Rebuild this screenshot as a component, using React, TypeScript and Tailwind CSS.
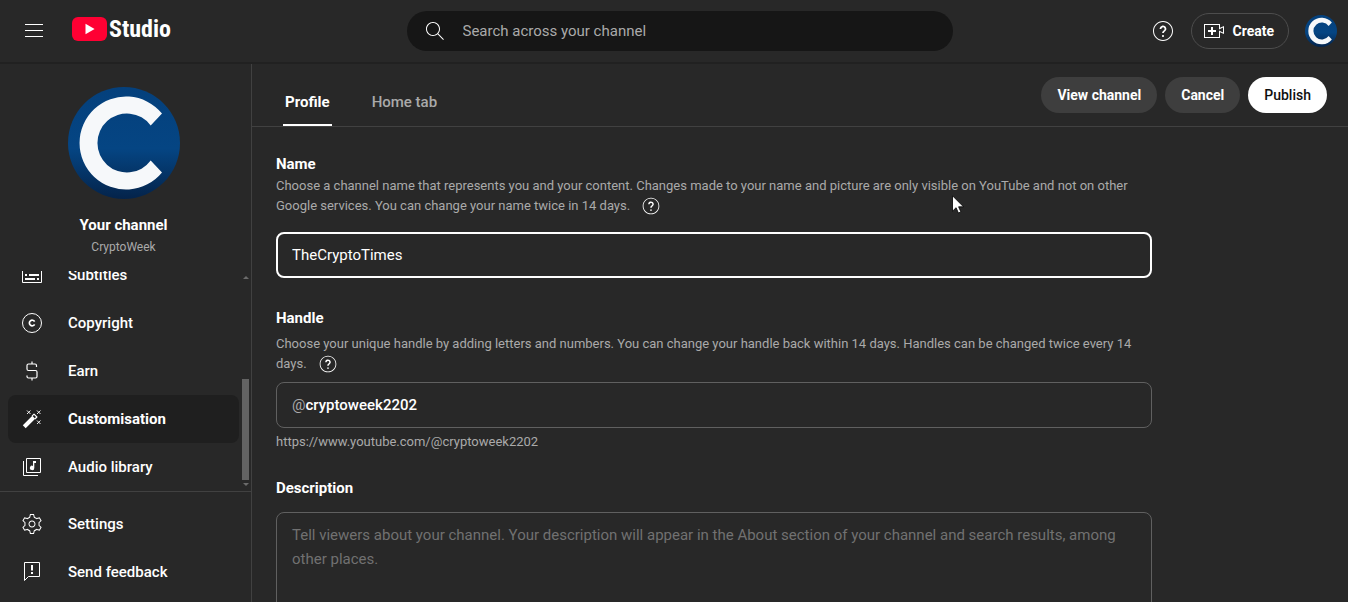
import { useState } from 'react';
import type { ReactNode } from 'react';
import clsx from 'clsx';

const HELP_PATH =
  'M15.36,9.96c0,1.09-0.67,1.67-1.31,2.24c-0.53,0.47-1.03,0.9-1.16,1.6L12.85,14h-1.75l0.03-0.28c0.14-1.17,0.8-1.76,1.47-2.27c0.52-0.4,1.01-0.77,1.01-1.49c0-0.51-0.23-0.97-0.63-1.29c-0.4-0.31-0.92-0.42-1.42-0.29c-0.59,0.15-1.05,0.67-1.19,1.34L10.32,10H8.57l0.06-0.42c0.2-1.4,1.15-2.53,2.42-2.87c1.05-0.29,2.14-0.08,2.98,0.57C14.88,7.92,15.36,8.9,15.36,9.96z M12,18c0.55,0,1-0.45,1-1s-0.45-1-1-1s-1,0.45-1,1S11.45,18,12,18z M12,3c-4.96,0-9,4.04-9,9s4.04,9,9,9s9-4.04,9-9S16.96,3,12,3 M12,2c5.52,0,10,4.48,10,10s-4.48,10-10,10S2,17.52,2,12S6.48,2,12,2L12,2z';

const SETTINGS_PATH =
  'M12 9.5c1.38 0 2.5 1.12 2.5 2.5s-1.12 2.5-2.5 2.5-2.5-1.12-2.5-2.5 1.12-2.5 2.5-2.5m0-1c-1.93 0-3.5 1.57-3.5 3.5s1.57 3.5 3.5 3.5 3.5-1.57 3.5-3.5-1.57-3.5-3.5-3.5zM13.22 3l.55 2.2.13.51.5.18c.61.23 1.19.56 1.72.98l.4.32.5-.14 2.17-.62 1.22 2.11-1.63 1.59-.37.36.08.51c.05.32.08.64.08.98s-.03.66-.08.98l-.08.51.37.36 1.63 1.59-1.22 2.11-2.17-.62-.5-.14-.4.32c-.53.43-1.11.76-1.72.98l-.5.18-.13.51-.55 2.24h-2.44l-.55-2.2-.13-.51-.5-.18c-.6-.23-1.18-.56-1.72-.99l-.4-.32-.5.14-2.17.62-1.21-2.12 1.63-1.59.37-.36-.08-.51c-.05-.32-.08-.65-.08-.98s.03-.66.08-.98l.08-.51-.37-.36L3.6 8.56l1.22-2.11 2.17.62.5.14.4-.32c.53-.44 1.11-.77 1.72-.99l.5-.18.13-.51.54-2.21h2.44M14 2h-4l-.74 2.96c-.73.27-1.4.66-2 1.14l-2.92-.83-2 3.46 2.19 2.13c-.06.37-.09.75-.09 1.14s.03.77.09 1.14l-2.19 2.13 2 3.46 2.92-.83c.6.48 1.27.87 2 1.14L10 22h4l.74-2.96c.73-.27 1.4-.66 2-1.14l2.92.83 2-3.46-2.19-2.13c.06-.37.09-.75.09-1.14s-.03-.77-.09-1.14l2.19-2.13-2-3.46-2.92.83c-.6-.48-1.27-.87-2-1.14L14 2z';

function Icon({ children, className = 'h-6 w-6' }: { children: ReactNode; className?: string }) {
  return (
    <svg viewBox="0 0 24 24" fill="currentColor" className={clsx('shrink-0', className)} aria-hidden="true">
      {children}
    </svg>
  );
}

const menuItems = [
  {
    id: 'subtitles',
    label: 'Subtitles',
    icon: (
      <>
        <path d="M2.5 4.5h19v15h-19z" fill="none" stroke="currentColor" />
        <path d="M5 11h2v2H5zM9 11h10v2H9zM5 15h10v2H5zM17 15h2v2h-2z" />
      </>
    )
  },
  {
    id: 'copyright',
    label: 'Copyright',
    icon: (
      <>
        <circle cx="12" cy="12" r="9.5" fill="none" stroke="currentColor" />
        <path d="M14.6 10.6A2.8 2.8 0 1 0 14.6 13.4" fill="none" stroke="currentColor" strokeWidth="1.7" />
      </>
    )
  },
  {
    id: 'earn',
    label: 'Earn',
    icon: (
      <path
        d="M12 2.5V5M12 19v2.5M16.5 8V6.5Q16.5 5 15 5H8.5Q7 5 7 6.5V10Q7 11.5 8.5 11.500H15.5Q17 11.5 17 13V17.5Q17 19 15.5 19H8.5Q7 19 7 17.5V16.5"
        fill="none"
        stroke="currentColor"
        strokeWidth="1.2"
      />
    )
  },
  {
    id: 'customisation',
    label: 'Customisation',
    icon: (
      <>
        <path d="M2.8 18.3 12.3 8.8 15.2 11.7 5.7 21.2z" />
        <path d="M12 9.1 14 7.1 16.9 10 14.9 12" fill="none" stroke="currentColor" strokeWidth="1.2" strokeLinejoin="round" />
        <path
          d="M7 3.5l3.5 3.5M10.5 3.5 7 7M17 3.5l3.5 3.5M20.5 3.5 17 7M17 13.5l3.5 3.5M20.5 13.5 17 17"
          stroke="currentColor"
          strokeWidth="0.9"
        />
      </>
    )
  },
  {
    id: 'audio',
    label: 'Audio library',
    icon: (
      <>
        <path d="M6.5 3.5h14v14h-14zM3.5 6v14.500H18" fill="none" stroke="currentColor" />
        <path d="M13 6h3v2h-1.700v4.900a2.200 2.200 0 1 1-1.300-2z" />
      </>
    )
  }
];

const footerItems = [
  { id: 'settings', label: 'Settings', icon: <path d={SETTINGS_PATH} /> },
  {
    id: 'feedback',
    label: 'Send feedback',
    icon: (
      <>
        <path d="M4.5 2.5h15v14H8.500l-4 4z" fill="none" stroke="currentColor" />
        <path d="M11 5h2v5.500h-2zM11 12h2v2h-2z" />
      </>
    )
  }
];

function ChannelAvatar({ id, className }: { id: string; className: string }) {
  return (
    <svg viewBox="0 0 112 112" className={clsx('shrink-0', className)} role="img" aria-label="CryptoWeek">
      <defs>
        <linearGradient id={id} x1="0" y1="0" x2="0" y2="1">
          <stop offset="0" stopColor="#04407c" />
          <stop offset="0.55" stopColor="#054583" />
          <stop offset="1" stopColor="#04234a" />
        </linearGradient>
      </defs>
      <circle cx="56" cy="56" r="56" fill={`url(#${id})`} />
      <path
        d="M94 26.5A46.5 46.5 0 1 0 94 85.500L82.700 73.500A29.500 29.500 0 1 1 82.700 38.500z"
        fill="#f6f8fa"
      />
    </svg>
  );
}

function HelpButton({ label }: { label: string }) {
  return (
    <button type="button" aria-label={label} className="ml-[11px] inline-flex h-5 w-5 align-top text-white">
      <Icon className="h-5 w-5">
        <path d={HELP_PATH} />
      </Icon>
    </button>
  );
}

function NavItem({ label, icon, active }: { label: string; icon: ReactNode; active?: boolean }) {
  return (
    <a
      href="#"
      aria-current={active ? 'page' : undefined}
      className={clsx(
        'mr-3 ml-2 flex h-12 shrink-0 items-center gap-6 rounded-lg pl-3 text-[15px] text-white',
        active ? 'bg-[#1f1f1f] font-bold' : 'font-medium'
      )}
    >
      <Icon>{icon}</Icon>
      <span>{label}</span>
    </a>
  );
}

function Header() {
  return (
    <header className="flex h-16 shrink-0 items-center border-b-2 border-[#212121] pr-[11px] pl-[22px]">
      <div className="flex flex-1 items-center gap-[26px]">
        <button type="button" aria-label="Menu">
          <Icon>
            <path d="M21,6H3V5h18V6z M21,11H3v1h18V11z M21,17H3v1h18V17z" />
          </Icon>
        </button>
        <a href="#" className="flex items-center gap-0.5 pb-1">
          <svg viewBox="0 0 35 24" className="h-6 w-[35px]" aria-hidden="true">
            <rect width="35" height="24" rx="6" fill="#ff0033" />
            <path d="M13.500 6.800 22.600 12l-9.100 5.200z" fill="#fff" />
          </svg>
          <span className="font-['Roboto_Condensed','Liberation_Sans_Narrow',Roboto,sans-serif] text-2xl leading-6 font-bold">
            Studio
          </span>
        </a>
      </div>

      <label className="flex h-10 w-full max-w-[546px] items-center gap-4 rounded-full bg-[#161616] px-4">
        <Icon>
          <path d="M20.87,20.17l-5.59-5.59C16.35,13.35,17,11.75,17,10c0-3.87-3.13-7-7-7s-7,3.13-7,7s3.13,7,7,7c1.75,0,3.35-0.65,4.58-1.71l5.59,5.59L20.87,20.17z M10,16c-3.31,0-6-2.69-6-6s2.69-6,6-6s6,2.69,6,6S13.31,16,10,16z" />
        </Icon>
        <input
          type="text"
          aria-label="Search across your channel"
          placeholder="Search across your channel"
          className="min-w-0 flex-1 bg-transparent text-[15px] outline-none placeholder:text-[#aaaaaa]"
        />
      </label>

      <div className="flex flex-1 items-center justify-end gap-4">
        <button type="button" aria-label="Help">
          <Icon>
            <path d={HELP_PATH} />
          </Icon>
        </button>
        <button
          type="button"
          className="flex h-9 items-center gap-1.5 rounded-full border border-[#4d4d4d] pr-3.5 pl-2.5 text-sm font-bold"
        >
          <Icon>
            <path d="M14 13h-3v3H9v-3H6v-2h3V8h2v3h3v2zm3-7H3v12h14v-6.390l4 1.830V8.560l-4 1.830V6m1-1v3.830L22 7v8l-4-1.830V19H2V5h16z" />
          </Icon>
          Create
        </button>
        <button type="button" aria-label="Account">
          <ChannelAvatar id="avatar-small" className="h-8 w-8" />
        </button>
      </div>
    </header>
  );
}

function Sidebar() {
  return (
    <aside className="flex w-[252px] shrink-0 flex-col border-r border-[#414141]">
      <div className="flex flex-col items-center pt-[23px] pr-1 pb-3.5">
        <ChannelAvatar id="avatar-large" className="h-28 w-28" />
        <p className="mt-4 text-[15px] leading-5 font-bold">Your channel</p>
        <p className="mt-0.5 text-xs leading-5 text-[#aaaaaa]">CryptoWeek</p>
      </div>

      <div className="relative min-h-0 flex-1">
        <nav className="flex h-full flex-col justify-end overflow-hidden">
          {menuItems.map((item) => (
            <NavItem key={item.id} label={item.label} icon={item.icon} active={item.id === 'customisation'} />
          ))}
        </nav>
        {/* Scrollbar */}
        <div className="absolute inset-y-[5px] right-0.5 flex w-[7px] flex-col items-center justify-between">
          <span className="border-x-[3px] border-b-[3px] border-x-transparent border-b-[#6b6b6b]" />
          <div className="flex w-full flex-col items-center gap-[3px]">
            <span className="h-[101px] w-full bg-[#636363]" />
            <span className="border-x-[3px] border-t-[3px] border-x-transparent border-t-[#6b6b6b]" />
          </div>
        </div>
      </div>

      <div className="border-t border-[#414141] pt-2 pb-1.5">
        {footerItems.map((item) => (
          <NavItem key={item.id} label={item.label} icon={item.icon} />
        ))}
      </div>
    </aside>
  );
}

const tabs = ['Profile', 'Home tab'];

export default function App() {
  const [activeTab, setActiveTab] = useState('Profile');
  const [name, setName] = useState('TheCryptoTimes');
  const [handle, setHandle] = useState('cryptoweek2202');

  return (
    <div className="relative flex h-screen flex-col overflow-hidden bg-[#282828] font-[Roboto,sans-serif] text-white">
      <Header />
      <div className="flex min-h-0 flex-1">
        <Sidebar />

        <main className="flex min-w-0 flex-1 flex-col">
          <div className="flex h-[63px] shrink-0 items-stretch justify-between border-b border-[#414141] pr-[21px] pl-[31px]">
            <div className="flex gap-[38px]">
              {tabs.map((tab) => (
                <button
                  key={tab}
                  type="button"
                  onClick={() => setActiveTab(tab)}
                  className={clsx(
                    'border-b-2 px-0.5 pt-4 text-[15px]',
                    activeTab === tab ? 'border-white font-bold text-white' : 'border-transparent font-medium text-[#aaaaaa]'
                  )}
                >
                  {tab}
                </button>
              ))}
            </div>
            <div className="flex items-center gap-2 text-sm font-bold">
              <button type="button" className="h-9 rounded-full bg-[#3e3e3e] px-4">
                View channel
              </button>
              <button type="button" className="h-9 rounded-full bg-[#3e3e3e] px-4">
                Cancel
              </button>
              <button type="button" className="h-9 rounded-full bg-white px-4 font-medium text-[#0f0f0f]">
                Publish
              </button>
            </div>
          </div>

          <div className="min-h-0 flex-1 overflow-hidden px-6 pt-[27px]">
            <div className="max-w-[876px]">
              <section>
                <label htmlFor="name" className="block text-[15px] leading-5 font-bold">
                  Name
                </label>
                <p className="mt-0.5 text-[13px] leading-5 text-[#aaaaaa]">
                  Choose a channel name that represents you and your content. Changes made to your name and picture are
                  only visible on YouTube and not on other Google services. You can change your name twice in 14 days.
                  <HelpButton label="About channel names" />
                </p>
                <input
                  id="name"
                  type="text"
                  value={name}
                  onChange={(e) => setName(e.target.value)}
                  className="mt-4 block h-[46px] w-full rounded-lg border-2 border-white bg-transparent px-3.5 text-[15px] outline-none"
                />
              </section>

              <section className="mt-[30px]">
                <label htmlFor="handle" className="block text-[15px] leading-5 font-bold">
                  Handle
                </label>
                <p className="mt-1.5 text-[13px] leading-5 text-[#aaaaaa]">
                  Choose your unique handle by adding letters and numbers. You can change your handle back within 14
                  days. Handles can be changed twice every 14 days.
                  <HelpButton label="About handles" />
                </p>
                <div className="mt-2 flex h-[46px] items-center rounded-lg border border-[#606060] px-[15px] text-[15px]">
                  <span className="text-[#aaaaaa]">@</span>
                  <input
                    id="handle"
                    type="text"
                    value={handle}
                    onChange={(e) => setHandle(e.target.value)}
                    className="min-w-0 flex-1 bg-transparent font-medium outline-none"
                  />
                </div>
                <p className="mt-1 text-[13px] leading-5 text-[#aaaaaa]">https://www.youtube.com/@{handle}</p>
              </section>

              <section className="mt-[26px]">
                <label htmlFor="description" className="block text-[15px] leading-5 font-bold">
                  Description
                </label>
                <textarea
                  id="description"
                  placeholder="Tell viewers about your channel. Your description will appear in the About section of your channel and search results, among other places."
                  className="mt-3.5 block h-40 w-full resize-none rounded-lg border border-[#606060] bg-transparent px-[15px] py-2.5 text-[15px] leading-6 outline-none placeholder:text-[#717171]"
                />
              </section>
            </div>
          </div>
        </main>
      </div>

      {/* Mouse pointer */}
      <svg viewBox="0 0 12 19" className="pointer-events-none absolute top-[195px] left-[952px] h-[19px] w-3" aria-hidden="true">
        <path d="M.5.8v15.400l3.600-3.500 2.300 5.300 2.500-1.100-2.300-5.100h4.900z" fill="#fff" stroke="#000" strokeWidth=".8" />
      </svg>
    </div>
  );
}
